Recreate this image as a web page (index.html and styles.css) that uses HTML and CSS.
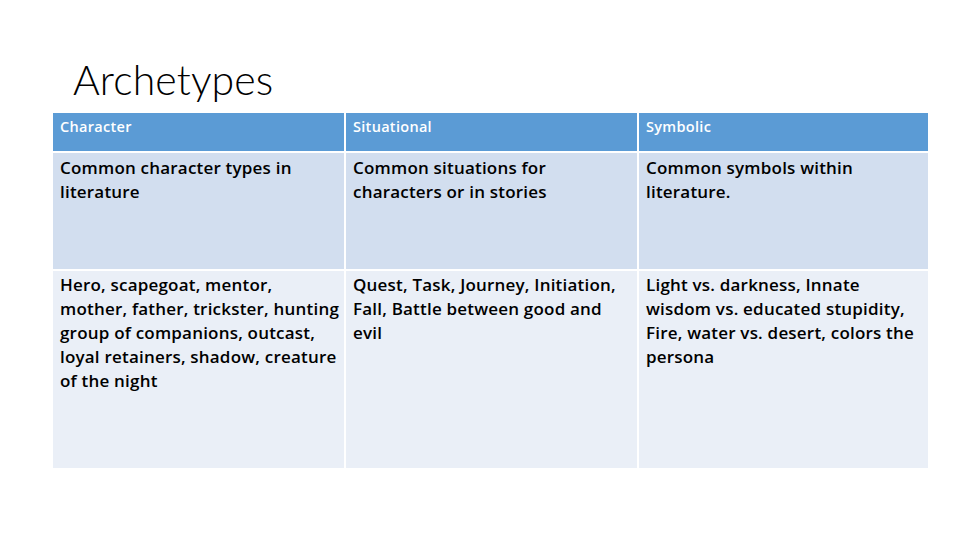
FILE: index.html
```html
<!DOCTYPE html>
<html>
<head>
<meta charset="utf-8">
<link rel="stylesheet" href="styles.css">
</head>
<body>
<div class="slide">
  <h1 class="title">Archetypes</h1>
  <div class="table">
    <div class="cell head">Character</div>
    <div class="cell head">Situational</div>
    <div class="cell head">Symbolic</div>
    <div class="cell r1">Common character types in literature</div>
    <div class="cell r1">Common situations for characters or in stories</div>
    <div class="cell r1">Common symbols within literature.</div>
    <div class="cell r2">Hero, scapegoat, mentor, mother, father, trickster, hunting group of companions, outcast, loyal retainers, shadow, creature of the night</div>
    <div class="cell r2">Quest, Task, Journey, Initiation, Fall, Battle between good and evil</div>
    <div class="cell r2">Light vs. darkness, Innate wisdom vs. educated stupidity, Fire, water vs. desert, colors the persona</div>
  </div>
</div>
</body>
</html>
```
FILE: styles.css
```css
html, body {
  margin: 0;
  padding: 0;
  background: #ffffff;
}
.slide {
  width: 960px;
  height: 540px;
  position: relative;
  overflow: hidden;
  font-family: "Open Sans", Lato, sans-serif;
  color: #000;
}
.title {
  margin: 0;
  padding: 54px 0 0 73px;
  font-family: Lato, sans-serif;
  font-weight: 300;
  font-size: 41px;
  line-height: 52px;
  height: 59px;
  letter-spacing: 0.1px;
}
.table {
  margin-left: 53px;
  width: 875px;
  display: grid;
  grid-template-columns: 291px 291px 289px;
  grid-template-rows: 38px 116px 197px;
  column-gap: 2px;
  row-gap: 2px;
}
.cell {
  padding: 3px 2px 0 7px;
  font-size: 17px;
  line-height: 24px;
  font-weight: 600;
  letter-spacing: 0.2px;
}
.r2 {
  padding-top: 2px;
}
.head {
  background: #5b9bd5;
  color: #ffffff;
  font-size: 14.5px;
  padding-top: 4px;
  line-height: 20px;
  letter-spacing: 0.3px;
}
.r1 {
  background: #d2deef;
}
.r2 {
  background: #eaeff7;
}
```
